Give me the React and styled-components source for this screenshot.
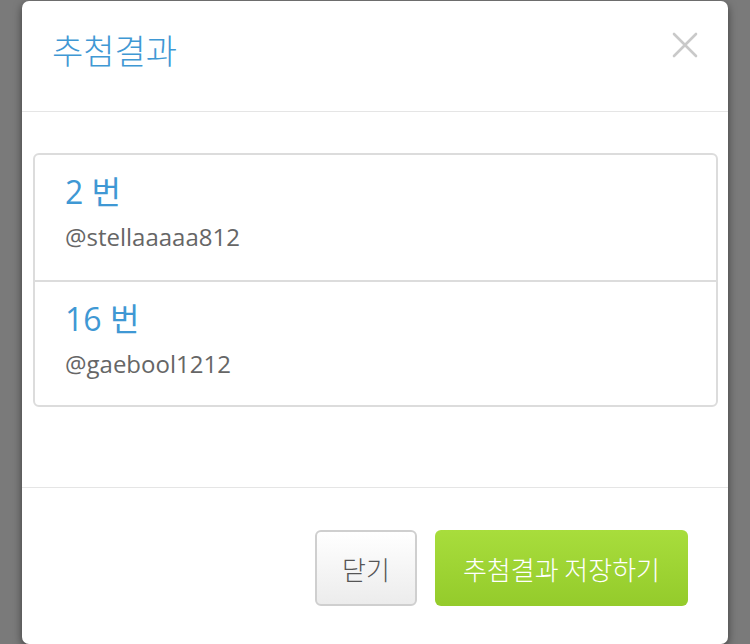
import React from 'react'
import styled, { createGlobalStyle } from 'styled-components'

const GlobalStyle = createGlobalStyle`
html, body {
  margin: 0;
  padding: 0;
  background: #7a7a7a;
  overflow: hidden;
}
body {
  font-family: "Open Sans", "Noto Sans CJK KR", sans-serif;
}
`

const StyledBackdrop = styled.div`
width: 750px;
height: 644px;
padding-top: 1px;
box-sizing: border-box;
`
const StyledModal = styled.div`
width: 706px;
height: 643px;
margin-left: 22px;
background: #fff;
border-radius: 7px;
box-shadow: 0 3px 9px rgba(0, 0, 0, 0.5);
display: flex;
flex-direction: column;
overflow: hidden;
`
const StyledHeader = styled.div`
height: 111px;
box-sizing: border-box;
border-bottom: 1px solid #e5e5e5;
display: flex;
align-items: center;
justify-content: space-between;
padding: 0 30px 0 30px;
`
const StyledTitle = styled.h4`
margin: 0 0 14px 0;
font-family: "Noto Sans CJK KR", sans-serif;
font-weight: 300;
font-size: 34px;
color: #3f98d4;
`
const StyledClose = styled.button`
border: 0;
background: none;
padding: 0;
margin: 0 0 22px 0;
width: 26px;
height: 26px;
cursor: pointer;
`
const StyledBody = styled.div`
height: 376px;
box-sizing: border-box;
padding: 41px 10px 0 11px;
border-bottom: 1px solid #e5e5e5;
`
const StyledList = styled.div`
border: 2px solid #dcdcdc;
border-radius: 6px;
`
const StyledItem = styled.div`
height: 125px;
box-sizing: border-box;
padding: 14px 30px 0 30px;
border-top: ${({ first }) => (first ? '0' : '2px solid #dcdcdc')};
`
const StyledNumber = styled.div`
font-size: 32px;
line-height: 46px;
color: #3f98d4;
font-family: "Open Sans", "Noto Sans CJK KR", sans-serif;
font-weight: 400;
`
const StyledUser = styled.div`
margin-top: 6px;
font-size: 24px;
line-height: 32px;
color: #666;
`
const StyledFooter = styled.div`
flex: 1;
display: flex;
justify-content: flex-end;
align-items: flex-start;
gap: 18px;
padding: 42px 40px 0 0;
`
const StyledButton = styled.button`
height: 76px;
padding: 0 ${({ primary }) => (primary ? '28px' : '25px')};
border-radius: 6px;
font-family: "Noto Sans CJK KR", sans-serif;
font-weight: 300;
font-size: 26px;
cursor: pointer;
color: ${({ primary }) => (primary ? '#fff' : '#555')};
border: ${({ primary }) => (primary ? '0' : '2px solid #cfcfcf')};
background: ${({ primary }) =>
  primary
    ? 'linear-gradient(to bottom, #a8dd3c, #94cb2b)'
    : 'linear-gradient(to bottom, #ffffff, #ececec)'};
`

const results = [
  { number: 2, user: '@stellaaaaa812' },
  { number: 16, user: '@gaebool1212' },
]

const CloseIcon = () => (
  <svg width="26" height="26" viewBox="0 0 26 26">
    <path d="M2 2 L24 24 M24 2 L2 24" stroke="#c9c9c9" strokeWidth="2.6" strokeLinecap="round" />
  </svg>
)

const App = () => {
  return (
    <>
      <GlobalStyle />
      <StyledBackdrop>
        <StyledModal>
          <StyledHeader>
            <StyledTitle>추첨결과</StyledTitle>
            <StyledClose aria-label="close">
              <CloseIcon />
            </StyledClose>
          </StyledHeader>
          <StyledBody>
            <StyledList>
              {results.map((item, index) => (
                <StyledItem key={index} first={index === 0}>
                  <StyledNumber>{item.number} 번</StyledNumber>
                  <StyledUser>{item.user}</StyledUser>
                </StyledItem>
              ))}
            </StyledList>
          </StyledBody>
          <StyledFooter>
            <StyledButton>닫기</StyledButton>
            <StyledButton primary>추첨결과 저장하기</StyledButton>
          </StyledFooter>
        </StyledModal>
      </StyledBackdrop>
    </>
  )
}

export default App
